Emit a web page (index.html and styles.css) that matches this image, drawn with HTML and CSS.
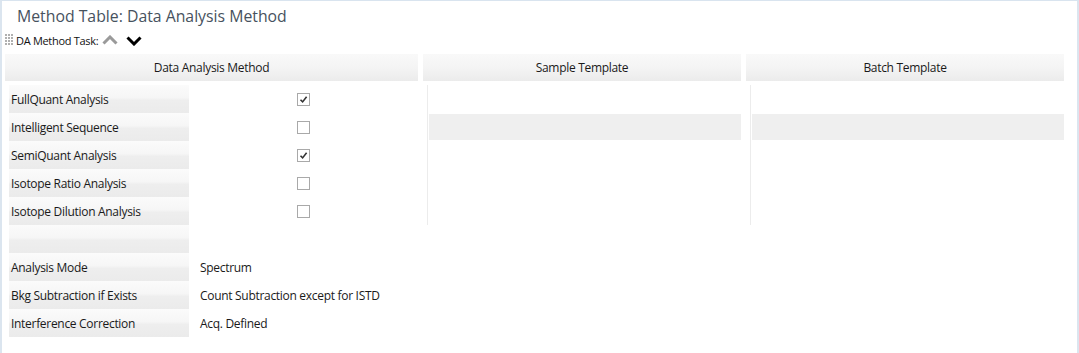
FILE: index.html
```html
<!DOCTYPE html>
<html>
<head>
<meta charset="utf-8">
<link rel="stylesheet" href="styles.css">
</head>
<body>
<div class="window">
  <div class="title">Method Table: Data Analysis Method</div>
  <div class="toolbar">
    <span class="grip"></span>
    <span class="task-label">DA Method Task:</span>
    <svg class="chev up" width="16" height="10" viewBox="0 0 16 10"><path d="M1.5 8.5 L8 2 L14.5 8.5" fill="none" stroke="#9a9a9a" stroke-width="3"/></svg>
    <svg class="chev down" width="16" height="10" viewBox="0 0 16 10"><path d="M1.5 1.5 L8 8 L14.5 1.5" fill="none" stroke="#000" stroke-width="3"/></svg>
  </div>
  <div class="headers">
    <div class="hcell c1">Data Analysis Method</div>
    <div class="hcell c2">Sample Template</div>
    <div class="hcell c3">Batch Template</div>
  </div>
  <div class="body">
    <div class="col-main">
      <div class="row"><div class="label">FullQuant Analysis</div><div class="val center"><span class="cb checked"><svg width="11" height="11" viewBox="0 0 11 11"><path d="M2.5 5.8 L4.6 7.9 L8.6 2.8" fill="none" stroke="#333" stroke-width="1.6"/></svg></span></div></div>
      <div class="row"><div class="label">Intelligent Sequence</div><div class="val center"><span class="cb"></span></div></div>
      <div class="row"><div class="label">SemiQuant Analysis</div><div class="val center"><span class="cb checked"><svg width="11" height="11" viewBox="0 0 11 11"><path d="M2.5 5.8 L4.6 7.9 L8.6 2.8" fill="none" stroke="#333" stroke-width="1.6"/></svg></span></div></div>
      <div class="row"><div class="label">Isotope Ratio Analysis</div><div class="val center"><span class="cb"></span></div></div>
      <div class="row"><div class="label">Isotope Dilution Analysis</div><div class="val center"><span class="cb"></span></div></div>
      <div class="row"><div class="label"></div><div class="val"></div></div>
      <div class="row"><div class="label">Analysis Mode</div><div class="val">Spectrum</div></div>
      <div class="row"><div class="label">Bkg Subtraction if Exists</div><div class="val">Count Subtraction except for ISTD</div></div>
      <div class="row"><div class="label">Interference Correction</div><div class="val">Acq. Defined</div></div>
    </div>
    <div class="col-tpl">
      <div class="trow"></div>
      <div class="trow"><div class="band"></div></div>
      <div class="trow"></div>
      <div class="trow"></div>
      <div class="trow"></div>
    </div>
    <div class="col-tpl">
      <div class="trow"></div>
      <div class="trow"><div class="band"></div></div>
      <div class="trow"></div>
      <div class="trow"></div>
      <div class="trow"></div>
    </div>
  </div>
</div>
</body>
</html>
```

FILE: styles.css
```css
* { box-sizing: border-box; }
html, body {
  margin: 0;
  padding: 0;
  background: #ffffff;
}
body {
  font-family: "Open Sans", "Noto Sans", sans-serif;
  font-size: 12px;
  letter-spacing: -0.3px;
  color: #1a1a1a;
}
.window {
  width: 1079px;
  height: 353px;
  border-top: 1px solid #d9e4ef;
  border-left: 2px solid #dbe5ef;
  border-right: 2px solid #dbe5ef;
  background: #ffffff;
}
.title {
  height: 30px;
  padding-left: 15px;
  padding-top: 3px;
  font-size: 15.8px;
  line-height: 24px;
  letter-spacing: 0;
  color: #47525e;
}
.toolbar {
  display: flex;
  align-items: center;
  height: 18px;
  padding-left: 3px;
}
.grip {
  width: 8px;
  height: 12px;
  margin-right: 3px;
  background-image: radial-gradient(circle at 1px 1px, #b0b0b0 1px, transparent 1px);
  background-size: 3px 3px;
}
.task-label {
  font-size: 11px;
  letter-spacing: -0.3px;
  color: #111;
  margin-right: 4px;
}
.chev.down { margin-left: 8px; margin-top: 2px; }
.headers {
  display: flex;
  gap: 5px;
  padding-left: 3px;
  margin-top: 5px;
}
.hcell {
  height: 27px;
  display: flex;
  align-items: center;
  justify-content: center;
  background: linear-gradient(to bottom, #f9f9f9 0%, #f4f4f4 50%, #ebebeb 100%);
  color: #1a1a1a;
}
.c1 { width: 413px; }
.c2 { width: 318px; }
.c3 { width: 318px; }
.body {
  display: flex;
  gap: 5px;
  padding-left: 3px;
  margin-top: 4px;
}
.col-main {
  width: 413px;
  padding-left: 4px;
}
.row {
  display: flex;
  height: 28px;
}
.label {
  width: 180px;
  height: 28px;
  padding-left: 2px;
  display: flex;
  align-items: center;
  background: linear-gradient(to bottom, #fbfbfb 0%, #f6f6f6 45%, #eeeeee 55%, #ebebeb 100%);
  white-space: nowrap;
}
.val {
  flex: 1;
  display: flex;
  align-items: center;
  padding-left: 11px;
  white-space: nowrap;
}
.val.center {
  justify-content: center;
  padding-left: 0;
}
.cb {
  width: 13px;
  height: 13px;
  border: 1px solid #a9a9a9;
  background: #fff;
  display: flex;
  align-items: center;
  justify-content: center;
}
.col-tpl {
  width: 318px;
  padding-left: 4px;
}
.trow {
  height: 28px;
  padding: 1px 0;
  border-left: 1px solid #ececec;
}
.band {
  height: 26px;
  margin-left: 1px;
  background: #efefef;
}
```
